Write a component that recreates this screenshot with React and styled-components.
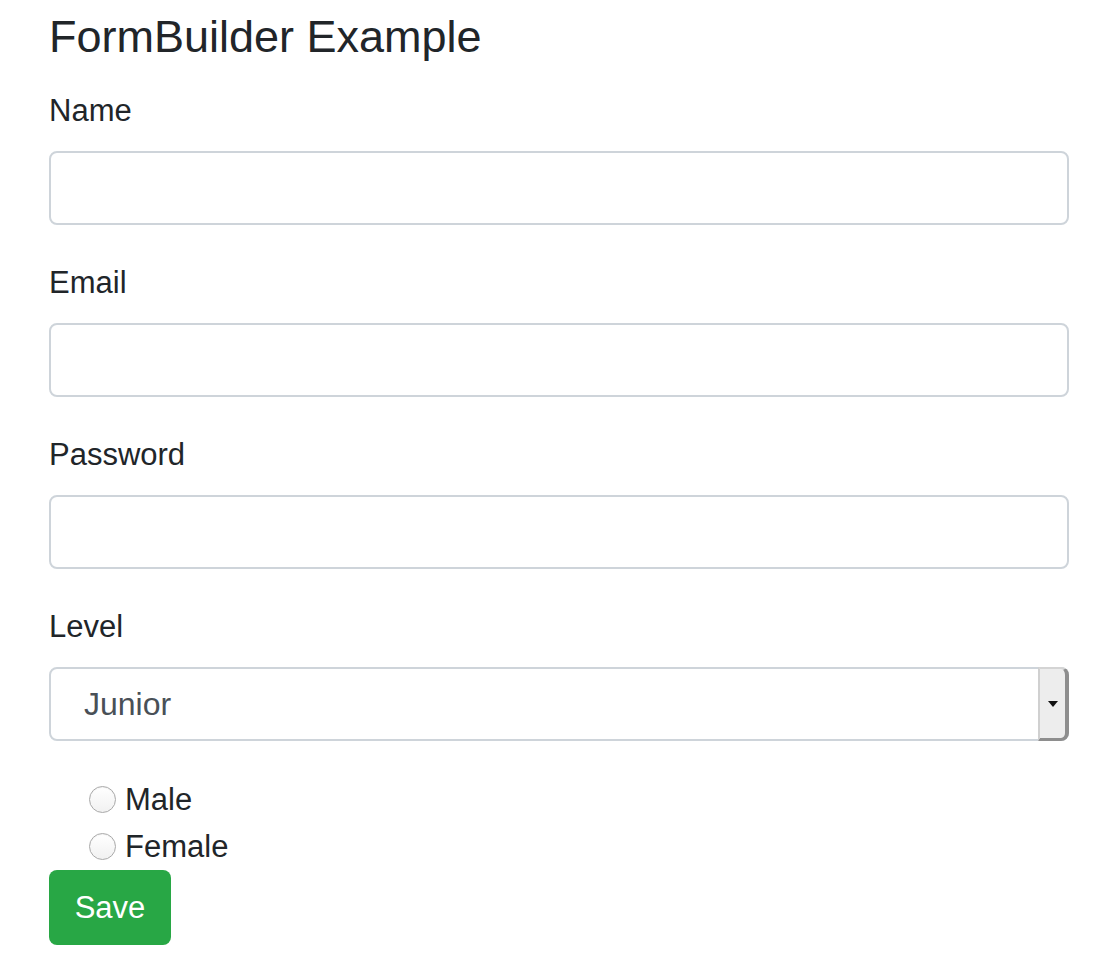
import React from "react";
import styled, { createGlobalStyle } from "styled-components";

const GlobalStyle = createGlobalStyle`
  body {
    margin: 0;
    background: #fff;
    font-family: "Liberation Sans", Arial, sans-serif;
    color: #212529;
  }
`;

const fields = [
  { label: "Name", type: "text" },
  { label: "Email", type: "email" },
  { label: "Password", type: "password" },
];

const App = () => {
  return (
    <Page>
      <GlobalStyle />
      <Title>FormBuilder Example</Title>
      <form onSubmit={(e) => e.preventDefault()}>
        {fields.map((f) => (
          <Group key={f.label}>
            <Label>{f.label}</Label>
            <Input type={f.type} />
          </Group>
        ))}
        <Group>
          <Label>Level</Label>
          <SelectWrap>
            <Select defaultValue="Junior">
              <option>Junior</option>
              <option>Middle</option>
              <option>Senior</option>
            </Select>
            <Stepper>
              <Caret />
            </Stepper>
          </SelectWrap>
        </Group>
        <Radios>
          <RadioRow>
            <Radio type="radio" name="gender" value="male" />
            Male
          </RadioRow>
          <RadioRow>
            <Radio type="radio" name="gender" value="female" />
            Female
          </RadioRow>
        </Radios>
        <SaveButton type="submit">Save</SaveButton>
      </form>
    </Page>
  );
};

export default App;

const Page = styled.div`
  width: 1020px;
  padding: 9px 49px 0;
`;

const Title = styled.h1`
  margin: 0 0 24px;
  font-size: 45px;
  line-height: 55px;
  font-weight: 400;
`;

const Group = styled.div`
  margin-bottom: 35px;
`;

const Label = styled.label`
  display: block;
  font-size: 31px;
  line-height: 45px;
  margin-bottom: 18px;
`;

const Input = styled.input`
  display: block;
  box-sizing: border-box;
  width: 100%;
  height: 74px;
  border: 2px solid #ced4da;
  border-radius: 8px;
  padding: 0 24px;
  font-size: 31px;
  font-family: inherit;
  color: #495057;
  background: #fff;
  outline: none;
`;

const SelectWrap = styled.div`
  position: relative;
  height: 74px;
`;

const Select = styled.select`
  appearance: none;
  box-sizing: border-box;
  width: 100%;
  height: 74px;
  border: 2px solid #ced4da;
  border-radius: 8px;
  padding: 0 33px;
  font-size: 32px;
  font-family: inherit;
  color: #495057;
  background: #fff;
  outline: none;
`;

const Stepper = styled.div`
  position: absolute;
  top: 0;
  right: 0;
  width: 31px;
  height: 74px;
  box-sizing: border-box;
  border-radius: 0 8px 8px 0;
  border-top: 2px solid #d4d4d4;
  border-left: 2px solid #d0d0d0;
  border-right: 4px solid #8e8e8e;
  border-bottom: 3px solid #8e8e8e;
  background: #ededed;
  display: flex;
  align-items: center;
  justify-content: center;
  pointer-events: none;
`;

const Caret = styled.span`
  width: 0;
  height: 0;
  border-left: 5px solid transparent;
  border-right: 5px solid transparent;
  border-top: 6px solid #111;
  margin-left: 1px;
`;

const Radios = styled.div`
  margin-top: 1px;
  padding-left: 40px;
`;

const RadioRow = styled.label`
  display: flex;
  align-items: center;
  height: 47px;
  font-size: 31px;
  color: #212529;
`;

const Radio = styled.input`
  appearance: none;
  width: 27px;
  height: 27px;
  margin: 0 9px 0 0;
  border-radius: 50%;
  border: 1.5px solid #a9a9a9;
  background: linear-gradient(#ffffff, #f1f1f1);
  box-sizing: border-box;
  box-shadow: inset 0 1px 1px rgba(0, 0, 0, 0.05);
`;

const SaveButton = styled.button`
  display: block;
  width: 122px;
  height: 75px;
  border: none;
  border-radius: 8px;
  background: #28a745;
  color: #fff;
  font-size: 31px;
  font-family: inherit;
  cursor: pointer;
`;
